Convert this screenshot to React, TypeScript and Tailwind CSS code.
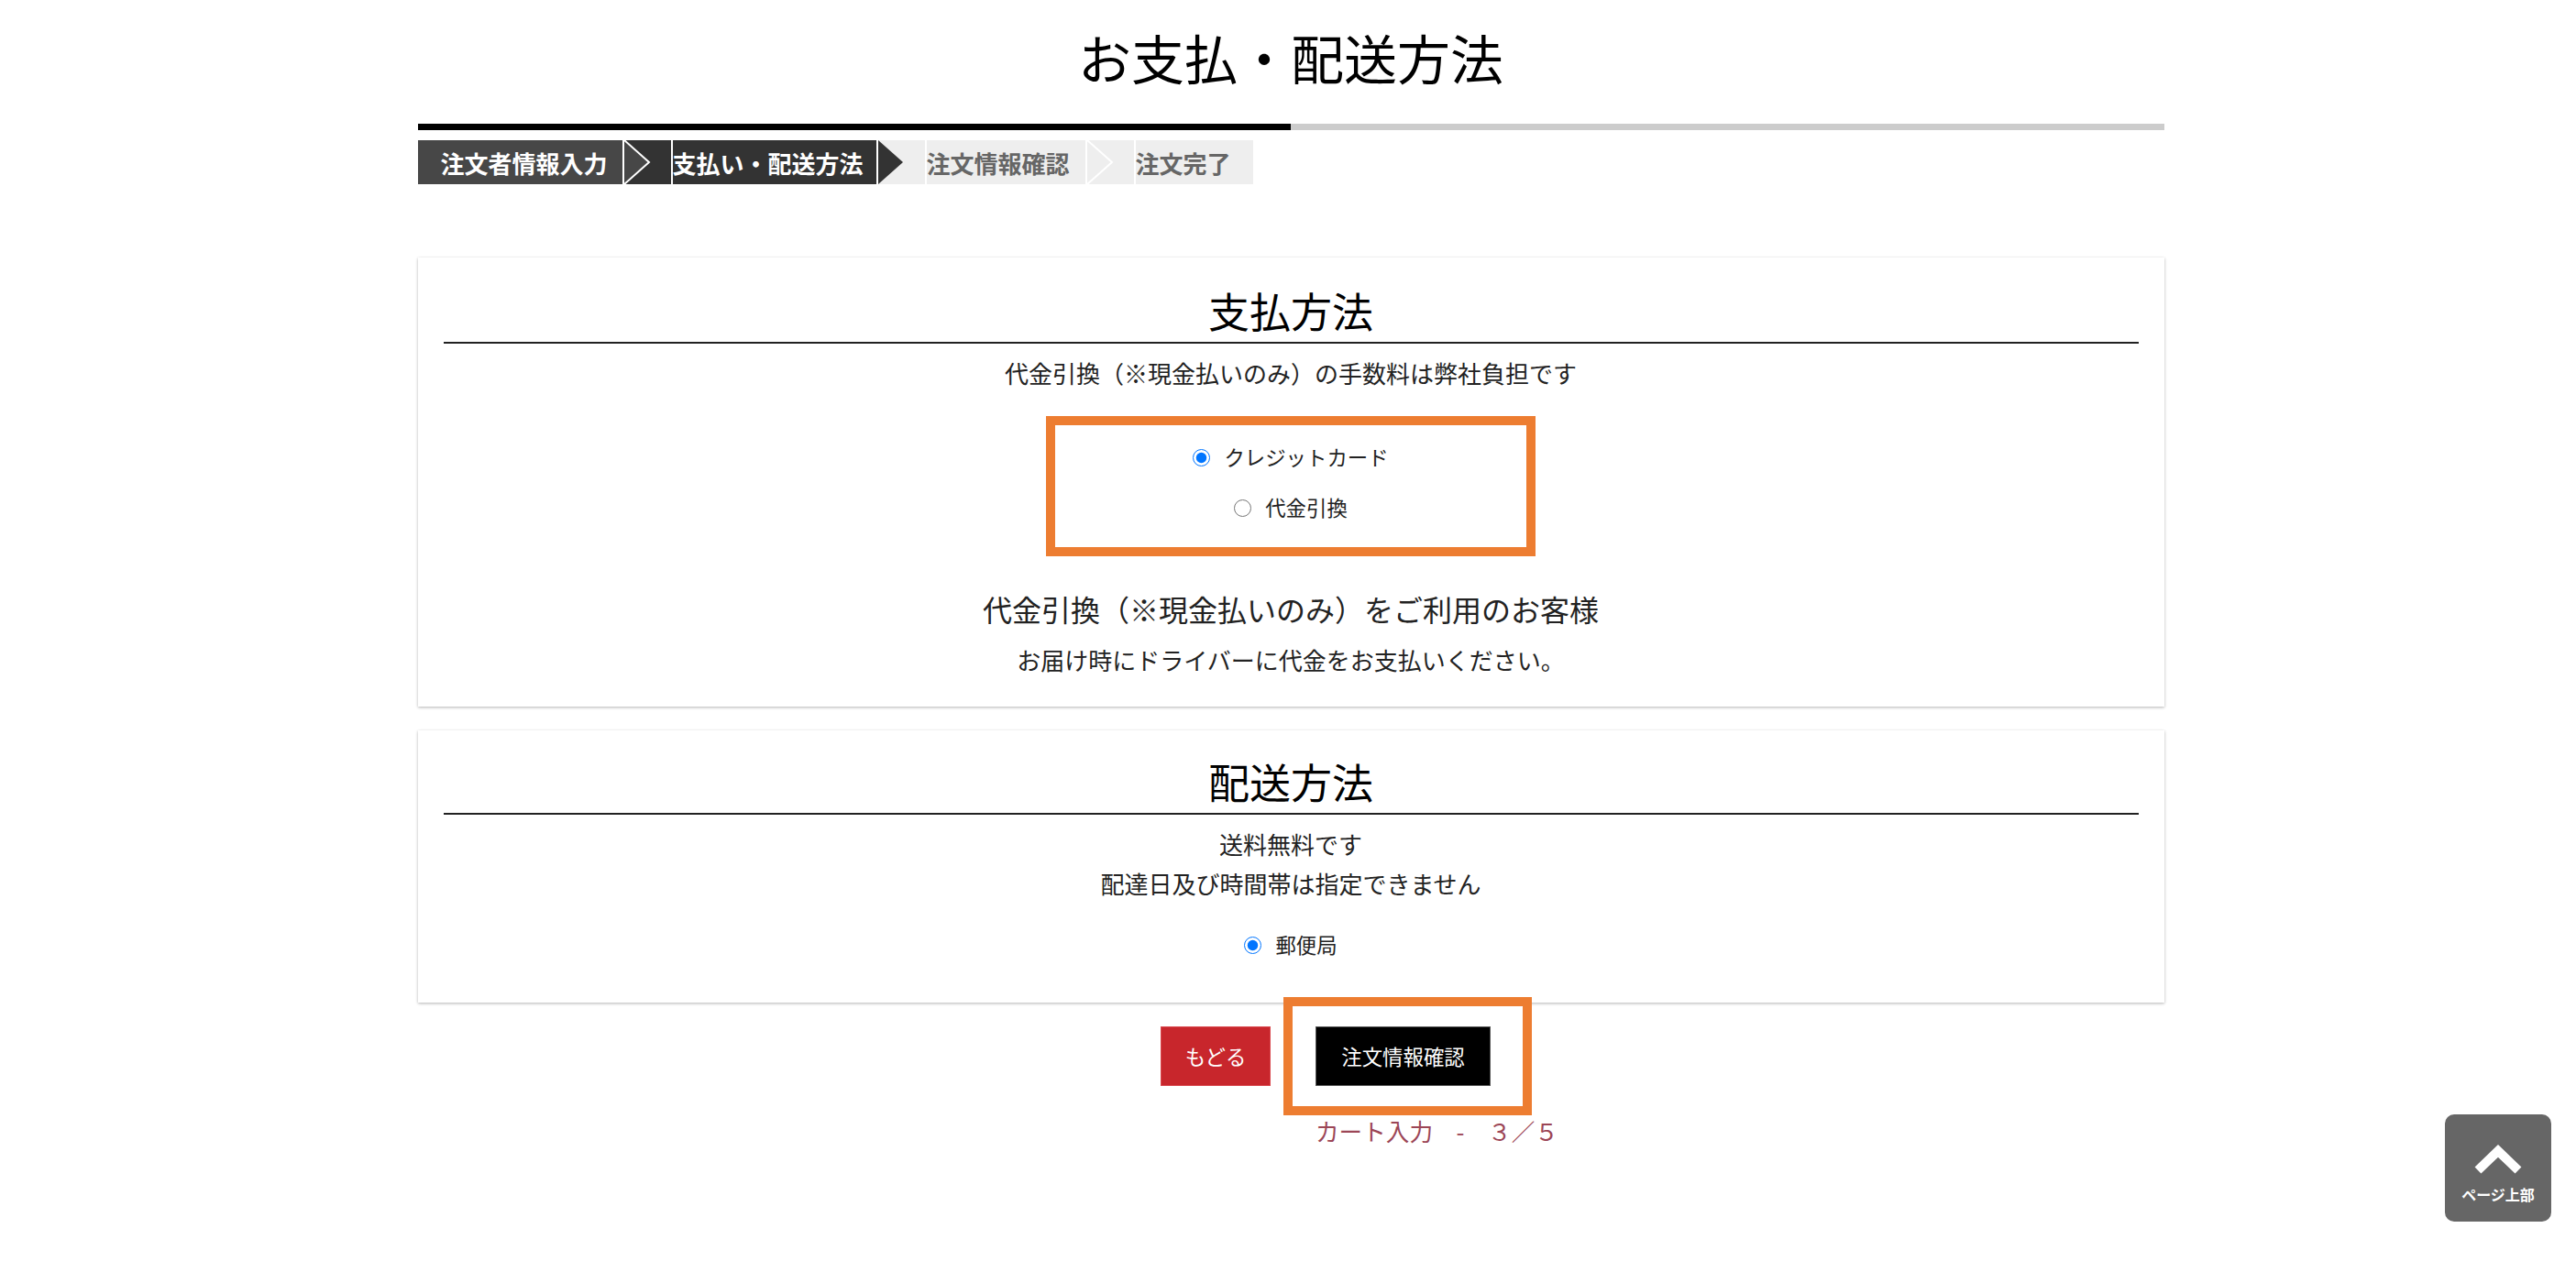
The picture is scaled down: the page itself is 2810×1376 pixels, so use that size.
import React from 'react';

const font = { fontFamily: '"Noto Sans CJK JP", "Noto Sans", sans-serif' };

type Arrow = { bg: string; fill: string; stroke: boolean };

function StepArrow({ bg, fill, stroke }: Arrow) {
  return (
    <svg width="51" height="48" viewBox="0 0 51 48" className="block shrink-0">
      <rect x="0" y="0" width="51" height="48" fill={bg} />
      <polygon points="0,0 27,24 0,48" fill={fill} />
      {stroke && <polyline points="0,0 27,24 0,48" fill="none" stroke="#fff" strokeWidth="2" />}
    </svg>
  );
}

function Steps() {
  return (
    <div className="mt-[11px] flex h-[48px] gap-[2px]">
      <div className="flex w-[223px] items-center bg-[#474747] pl-[25px] text-[26px] font-bold text-white">注文者情報入力</div>
      <StepArrow bg="#333333" fill="#474747" stroke />
      <div className="flex w-[222px] items-center bg-[#333333] text-[26px] font-bold whitespace-nowrap text-white">支払い・配送方法</div>
      <StepArrow bg="#eeeeee" fill="#333333" stroke={false} />
      <div className="flex w-[173px] items-center bg-[#eeeeee] text-[26px] font-bold text-[#666]">注文情報確認</div>
      <StepArrow bg="#eeeeee" fill="#eeeeee" stroke />
      <div className="flex w-[128px] items-center bg-[#eeeeee] text-[26px] font-bold text-[#666]">注文完了</div>
    </div>
  );
}

function Radio({ label, checked }: { label: string; checked: boolean }) {
  return (
    <label className="flex h-[40px] items-center justify-center gap-[15px] text-[22.4px] text-[#222]">
      <input type="radio" checked={checked} readOnly className="m-0 h-[19px] w-[19px] accent-[#0075ff]" />
      <span>{label}</span>
    </label>
  );
}

function Card({ title, children, pad }: { title: string; children: React.ReactNode; pad: string }) {
  return (
    <section className={`bg-white px-[28px] shadow-[0_1px_3px_rgba(0,0,0,0.3)] ${pad}`}>
      <h2 className="border-b-2 border-[#222] text-center text-[45px] leading-[68px] font-normal text-black">{title}</h2>
      {children}
    </section>
  );
}

export default function App() {
  return (
    <div className="min-h-screen bg-white text-[#222]" style={font}>
      <div className="mx-auto w-[1911px] pt-[19px] pr-0 pb-[120px] pl-[6px]">
        <h1 className="text-center text-[58px] leading-[87px] font-normal text-black">お支払・配送方法</h1>

        {/* progress */}
        <div className="mt-[29px] flex h-[7px]">
          <div className="w-1/2 bg-black" />
          <div className="w-1/2 bg-[#cccccc]" />
        </div>
        <Steps />

        {/* 支払方法 */}
        <div className="mt-[80px]">
          <Card title="支払方法" pad="pt-[24px] pb-[30px]">
            <p className="mt-[11px] text-center text-[26px] leading-[42px]">代金引換（※現金払いのみ）の手数料は弊社負担です</p>
            <div className="mx-auto mt-[26px] w-[534px] border-[10px] border-[#ed7d31] pt-[15px] pb-[23px]">
              <div className="flex flex-col gap-[15px]">
                <Radio label="クレジットカード" checked />
                <Radio label="代金引換" checked={false} />
              </div>
            </div>
            <p className="mt-[33px] text-center text-[32px] leading-[48px]">代金引換（※現金払いのみ）をご利用のお客様</p>
            <p className="mt-[11px] text-center text-[26px] leading-[42px]">お届け時にドライバーに代金をお支払いください。</p>
          </Card>
        </div>

        {/* 配送方法 */}
        <div className="mt-[26px]">
          <Card title="配送方法" pad="pt-[22px] pb-[43px]">
            <div className="mt-[10px] text-center text-[26px] leading-[43px]">
              <p>送料無料です</p>
              <p>配達日及び時間帯は指定できません</p>
            </div>
            <div className="mt-[26px]">
              <Radio label="郵便局" checked />
            </div>
          </Card>
        </div>

        {/* buttons */}
        <div className="mt-[26px] flex justify-center gap-[49px] pl-[76px]">
          <button className="h-[65px] w-[120px] border border-[#d9474d] bg-[#c8262c] text-[22.4px] text-white">もどる</button>
          <div className="w-[191px]">
            <div className="relative">
              <button className="h-[65px] w-[191px] border border-[#555] bg-black text-[22.4px] text-white">注文情報確認</button>
              <div className="pointer-events-none absolute -top-[32px] -right-[45px] -bottom-[32px] -left-[35px] border-[10px] border-[#ed7d31]" />
            </div>
            <p className="mt-[29px] text-[25.6px] leading-[39px] whitespace-nowrap text-[#9c4656]">カート入力　-　３／５</p>
          </div>
        </div>
      </div>

      {/* page top */}
      <div className="fixed right-[27px] bottom-[43px] flex h-[117px] w-[116px] flex-col items-center rounded-[10px] bg-[#666]">
        <svg width="60" height="40" viewBox="0 0 60 40" className="mt-[30px]">
          <polyline points="8,31 30,10 52,31" fill="none" stroke="#fff" strokeWidth="10" strokeLinejoin="miter" />
        </svg>
        <span className="mt-[8px] text-[16px] leading-[18px] font-bold text-white">ページ上部</span>
      </div>
    </div>
  );
}
